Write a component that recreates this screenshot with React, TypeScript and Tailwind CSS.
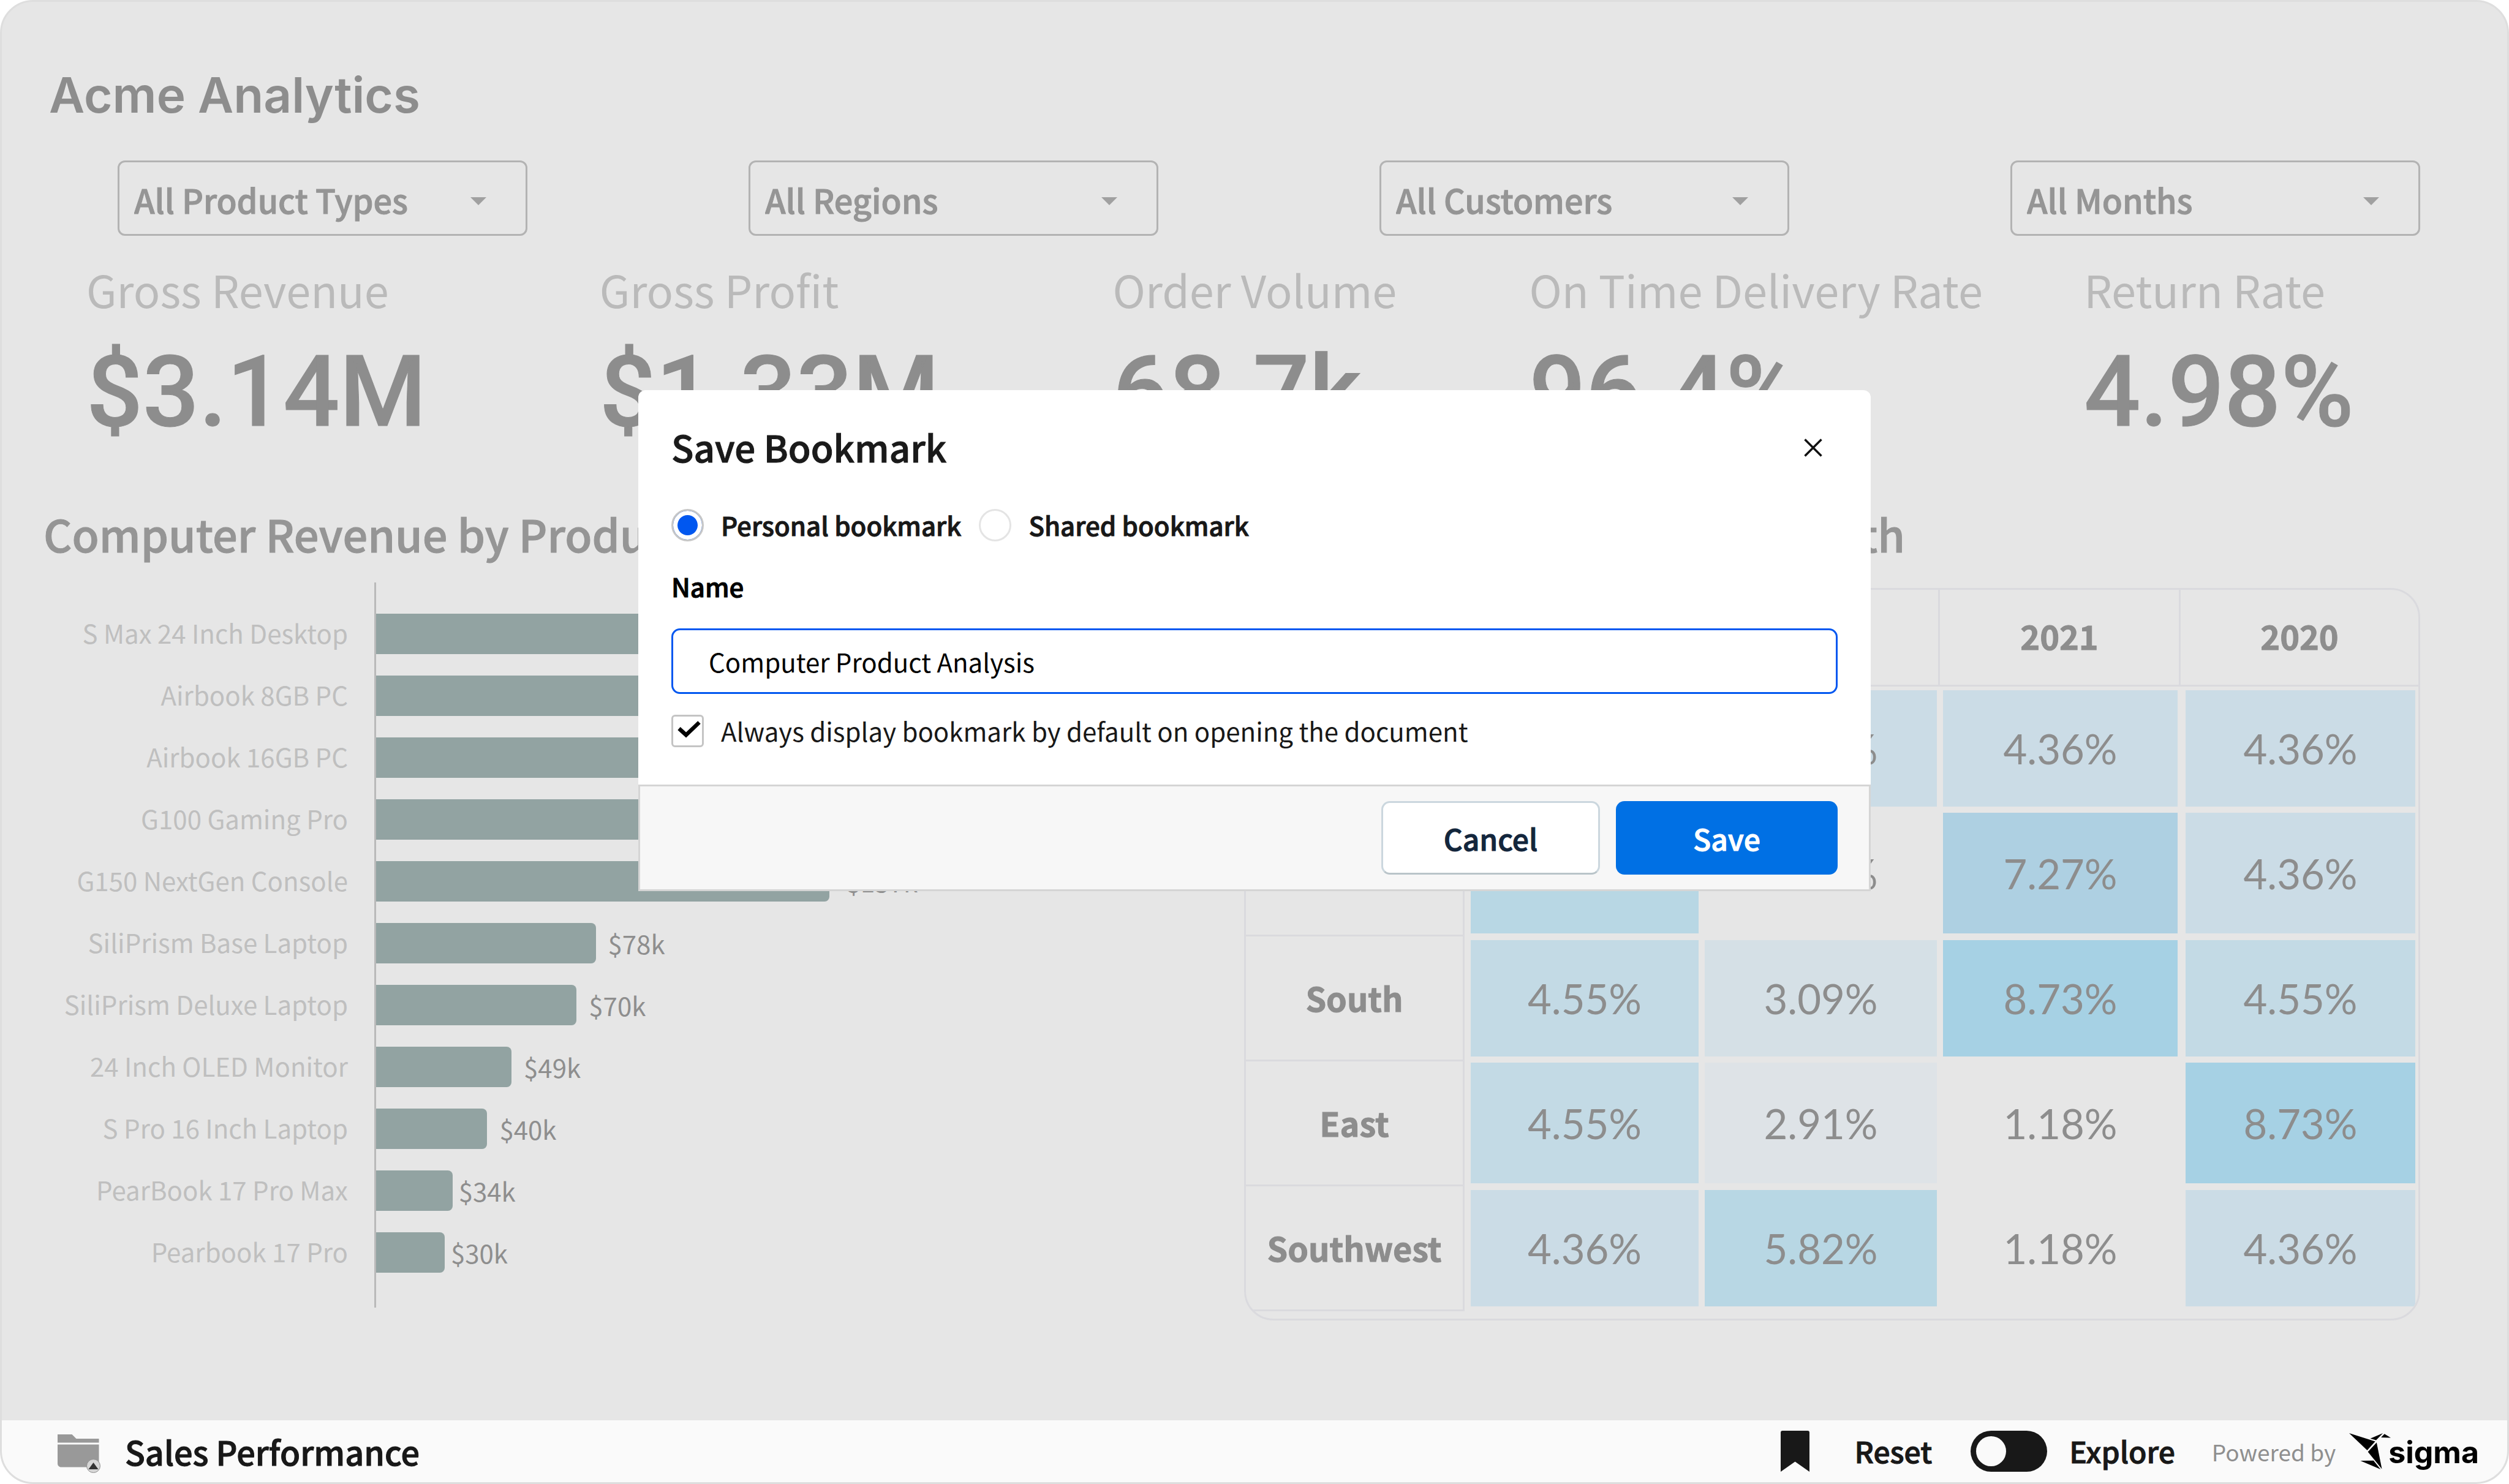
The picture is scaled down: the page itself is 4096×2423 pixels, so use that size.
import { useState } from "react";

const filters = [
  { label: "Product type", value: "All Product Types" },
  { label: "Region", value: "All Regions" },
  { label: "Customer", value: "All Customers" },
  { label: "Month", value: "All Months" },
];

const kpis = [
  { label: "Gross Revenue", value: "$3.14M" },
  { label: "Gross Profit", value: "$1.33M" },
  { label: "Order Volume", value: "68.7k" },
  { label: "On Time Delivery Rate", value: "96.4%" },
  { label: "Return Rate", value: "4.98%" },
];

// share: bar length as a percentage of the plot area
const products = [
  { name: "S Max 24 Inch Desktop", value: "$216k", share: 72 },
  { name: "Airbook 8GB PC", value: "$205k", share: 68 },
  { name: "Airbook 16GB PC", value: "$190k", share: 63 },
  { name: "G100 Gaming Pro", value: "$176k", share: 58 },
  { name: "G150 NextGen Console", value: "$157k", share: 52.2 },
  { name: "SiliPrism Base Laptop", value: "$78k", share: 25.3 },
  { name: "SiliPrism Deluxe Laptop", value: "$70k", share: 23.1 },
  { name: "24 Inch OLED Monitor", value: "$49k", share: 15.6 },
  { name: "S Pro 16 Inch Laptop", value: "$40k", share: 12.8 },
  { name: "PearBook 17 Pro Max", value: "$34k", share: 8.8 },
  { name: "Pearbook 17 Pro", value: "$30k", share: 7.9 },
];

// Longer bars leave more room before their value.
function barGap(share: number) {
  if (share < 10) return "gap-2.5";
  if (share > 50) return "gap-7";
  return "gap-5";
}

const years = ["2023", "2022", "2021", "2020"];

const regions = [
  { name: "West", cells: ["4.36%", "4.36%", "4.36%", "4.36%"] },
  { name: "Midwest", cells: ["5.82%", "1.18%", "7.27%", "4.36%"] },
  { name: "South", cells: ["4.55%", "3.09%", "8.73%", "4.55%"] },
  { name: "East", cells: ["4.55%", "2.91%", "1.18%", "8.73%"] },
  { name: "Southwest", cells: ["4.36%", "5.82%", "1.18%", "4.36%"] },
];

const heat: Record<string, string> = {
  "8.73%": "bg-[#a6d1e4]",
  "7.27%": "bg-[#aed0e2]",
  "5.82%": "bg-[#b8d7e4]",
  "4.55%": "bg-[#c3dae5]",
  "4.36%": "bg-[#cbdce6]",
  "3.09%": "bg-[#d5e0e6]",
  "2.91%": "bg-[#dee3e7]",
  "1.18%": "",
};

// Medium weight thickened by a hairline stroke gives a semibold text colour.
const semibold = "font-medium [-webkit-text-stroke:1px]";

function Filters() {
  return (
    <div className="mt-[59px] flex justify-between pl-[189px] pr-[142px]">
      {filters.map((f) => (
        <div key={f.label} className="relative w-[669px]">
          <select
            aria-label={f.label}
            className={`block h-[123px] w-full appearance-none rounded-xl border-[3px] border-[#b3b3b3] bg-transparent pt-1 pl-6 text-[54px] leading-[80px] text-[#959595] ${semibold}`}
          >
            <option>{f.value}</option>
          </select>
          <svg
            className="pointer-events-none absolute right-[67px] top-[60px] h-[13px] w-[26px]"
            viewBox="0 0 26 13"
            aria-hidden="true"
          >
            <path d="M0 0H26L13 13Z" fill="#a0a0a0" />
          </svg>
        </div>
      ))}
    </div>
  );
}

function Kpis() {
  return (
    <dl className="mt-[43px] grid grid-cols-[838fr_838fr_680fr_906fr_691fr] pl-[138px]">
      {kpis.map((k) => (
        <div key={k.label}>
          <dt className="text-[72px] leading-[88px] whitespace-nowrap text-[#bababa]">{k.label}</dt>
          <dd className="mt-[34px] font-['Roboto',sans-serif] text-[162px] leading-[180px] font-medium text-[#8d8d8d] [-webkit-text-stroke:1px]">
            {k.value}
          </dd>
        </div>
      ))}
    </dl>
  );
}

function RevenueChart() {
  return (
    <section>
      <h2
        className={`pl-[68px] text-[72px] leading-[88px] whitespace-nowrap text-[#959595] ${semibold}`}
      >
        Computer Revenue by Product
      </h2>
      <div className="mt-9 flex">
        <ul className="w-[608px] shrink-0 pt-[31px] pr-[43px] text-right text-[42px] text-[#bfbfbf]">
          {products.map((p) => (
            <li key={p.name} className="h-[101px] leading-[101px] whitespace-nowrap">
              {p.name}
            </li>
          ))}
        </ul>
        <ul className="flex-1 border-l-[3px] border-[#bababa] pt-[33px] pb-10 text-[42px] text-[#8e8e8e]">
          {products.map((p) => (
            <li
              key={p.name}
              className={`flex h-[101px] items-center leading-[101px] ${barGap(p.share)}`}
            >
              <div className="h-[66px] rounded-r-lg bg-[#92a3a2]" style={{ width: `${p.share}%` }} />
              {p.value}
            </li>
          ))}
        </ul>
      </div>
    </section>
  );
}

function RegionTable() {
  return (
    <section className="pr-[142px]">
      <h2
        className={`pl-[14px] text-[72px] leading-[88px] whitespace-nowrap text-[#959595] ${semibold}`}
      >
        Return Rate by Region &amp; Month
      </h2>
      <div className="mt-[45px] overflow-hidden rounded-[48px] border-[3px] border-[#dadade] pb-3">
        <table className="w-full table-fixed border-separate border-spacing-0 text-center text-[#8d8d8d]">
          <colgroup>
            <col className="w-[357px]" />
            <col className="w-[387px]" />
            <col className="w-[389px]" />
            <col className="w-[393px]" />
            <col className="w-[388px]" />
          </colgroup>
          <thead>
            <tr className="h-[158px] text-[54px] leading-[80px]">
              <td className="border-r-[3px] border-b-[3px] border-[#dadade]" />
              {years.map((y) => (
                <th
                  key={y}
                  scope="col"
                  className="border-r-[3px] border-b-[3px] border-[#dadade] pb-1.5 font-bold [-webkit-text-stroke:1px] last:border-r-0"
                >
                  {y}
                </th>
              ))}
            </tr>
          </thead>
          <tbody>
            {regions.map((r) => (
              <tr key={r.name} className="group h-[204px]">
                <th
                  scope="row"
                  className="border-r-[3px] border-b-[3px] border-[#dadade] pb-0.5 text-[54px] leading-[80px] font-bold [-webkit-text-stroke:1px]"
                >
                  {r.name}
                </th>
                {r.cells.map((c, i) => (
                  <td
                    key={years[i]}
                    className="h-[204px] px-[5px] pt-1.5 pb-2 font-['Lato',sans-serif] text-[67px] leading-[80px] group-even:pt-0.5 group-even:pb-[5px] nth-2:pl-2.5 last:pl-2"
                  >
                    <div
                      className={`flex h-[190px] items-center justify-center group-even:h-[197px] ${heat[c]}`}
                    >
                      {c}
                    </div>
                  </td>
                ))}
              </tr>
            ))}
          </tbody>
        </table>
      </div>
    </section>
  );
}

function BookmarkDialog() {
  const [kind, setKind] = useState("personal");
  const [name, setName] = useState("Computer Product Analysis");
  const [always, setAlways] = useState(true);
  const radio =
    "size-[53px] appearance-none rounded-full border-[3px] border-[#e4e4e4] bg-white checked:border-[#c7c7c7] checked:bg-[#0057f0] checked:shadow-[inset_0_0_0_7px_white]";
  return (
    <div
      role="dialog"
      aria-labelledby="dialog-title"
      className="absolute top-[634px] left-1/2 w-[2012px] -translate-x-1/2 overflow-hidden rounded-t-xl bg-white"
    >
      <form onSubmit={(e) => e.preventDefault()}>
        <div className="px-[54px] pt-[52px] pb-14">
          <div className="flex items-center justify-between">
            <h2
              id="dialog-title"
              className={`text-[60px] leading-[80px] text-[#1a1a1a] ${semibold}`}
            >
              Save Bookmark
            </h2>
            <button type="button" aria-label="Close" className="mt-1 mr-[25px]">
              <svg className="size-[30px]" viewBox="0 0 30 30" aria-hidden="true">
                <path d="M1.5 1.5L28.5 28.5M28.5 1.5L1.5 28.5" stroke="#111" strokeWidth="3.5" />
              </svg>
            </button>
          </div>
          <div
            className={`mt-14 flex items-center text-[42px] leading-[64px] text-[#181818] ${semibold}`}
          >
            <input
              id="personal"
              type="radio"
              name="kind"
              checked={kind === "personal"}
              onChange={() => setKind("personal")}
              className={radio}
            />
            <label htmlFor="personal" className="ml-7">
              Personal bookmark
            </label>
            <input
              id="shared"
              type="radio"
              name="kind"
              checked={kind === "shared"}
              onChange={() => setKind("shared")}
              className={`ml-[29px] ${radio}`}
            />
            <label htmlFor="shared" className="ml-7">
              Shared bookmark
            </label>
          </div>
          <label
            htmlFor="bookmark-name"
            className={`mt-9 block text-[42px] leading-[64px] text-black ${semibold}`}
          >
            Name
          </label>
          <input
            id="bookmark-name"
            type="text"
            value={name}
            onChange={(e) => setName(e.target.value)}
            className="mt-[37px] block h-[107px] w-full rounded-[14px] border-[3px] border-[#0057f0] bg-white pl-[58px] text-[42px] text-black outline-none"
          />
          <div className="mt-7 flex items-center">
            <div className="relative size-[53px]">
              <input
                id="always"
                type="checkbox"
                checked={always}
                onChange={(e) => setAlways(e.target.checked)}
                className="peer block size-[53px] appearance-none rounded-md border-[3px] border-[#c4c4c4] bg-white"
              />
              <svg
                className="pointer-events-none absolute inset-0 hidden size-[53px] peer-checked:block"
                viewBox="0 0 53 53"
                aria-hidden="true"
              >
                <path d="M12.5 22.5L24 33L45.5 12.5" fill="none" stroke="#000" strokeWidth="6.5" />
              </svg>
            </div>
            <label htmlFor="always" className="ml-7 text-[42px] leading-[64px] text-[#181818]">
              Always display bookmark by default on opening the document
            </label>
          </div>
        </div>
        <div
          className={`flex justify-end gap-[26px] border-[3px] border-[#d5d5d5] bg-[#f7f7f7] px-[51px] py-6 text-[48px] leading-[72px] ${semibold}`}
        >
          <button
            type="button"
            className="h-[120px] w-[357px] rounded-[14px] border-[3px] border-[#cbd7de] border-b-[#b9c4c9] bg-white text-[#13263c]"
          >
            Cancel
          </button>
          <button type="submit" className="h-[120px] w-[362px] rounded-[14px] bg-[#0070e4] text-white">
            Save
          </button>
        </div>
      </form>
    </div>
  );
}

function Footer() {
  const [explore, setExplore] = useState(false);
  return (
    <footer className="flex h-[101px] items-center bg-[#fafafa] pr-[46px] pl-[91px] text-[#181818]">
      <svg className="mt-2 h-[64px] w-[72px]" viewBox="0 0 72 64" aria-hidden="true">
        <path d="M0 0H23.5L30.5 7H67.5V13.5H0Z" fill="#999" />
        <path d="M0 16.5H67.5V53.5H6C2.5 53.5 0 51 0 47.5Z" fill="#999" />
        <circle cx="58.5" cy="51.5" r="11" fill="#d6d6d6" stroke="#8c8c8c" />
        <path d="M58.5 46L66.5 57H50.5Z" fill="#333" />
      </svg>
      <span className={`ml-[38px] text-[54px] leading-[80px] ${semibold}`}>Sales Performance</span>
      <div className="ml-auto flex items-center text-[48px] leading-[72px]">
        <button type="button" aria-label="Bookmarks">
          <svg className="h-[67px] w-[47px]" viewBox="0 0 47 67" aria-hidden="true">
            <path d="M3 0H44Q47 0 47 3V67L23.5 50.5L0 67V3Q0 0 3 0Z" fill="#181818" />
          </svg>
        </button>
        <button type="button" className={`ml-[73px] pb-1 ${semibold}`}>
          Reset
        </button>
        <span className="relative ml-[63px] h-[67px] w-[125px]">
          <input
            id="explore"
            type="checkbox"
            role="switch"
            checked={explore}
            onChange={(e) => setExplore(e.target.checked)}
            className="peer block h-[67px] w-[125px] appearance-none rounded-full bg-[#181818]"
          />
          <span className="pointer-events-none absolute top-[9px] left-[9px] size-[49px] rounded-full bg-[#fafafa] peer-checked:left-[67px]" />
        </span>
        <label htmlFor="explore" className={`ml-[36px] pb-1 ${semibold}`}>
          Explore
        </label>
        <span className="ml-[60px] text-[37px] leading-[60px] text-[#8f8f8f]">Powered by</span>
        <a href="#sigma" className="ml-[22px] flex items-center text-black">
          <svg className="h-[59px] w-[68px]" viewBox="49 97 244 211" aria-hidden="true">
            <path d="M49 97L202 145L155 197Z" />
            <path d="M173 128L247 97L207 138Z" />
            <path d="M256 101L294 124L236 122Z" />
            <path d="M210 151L241 307L159 206Z" />
            <path d="M115 258L192 257L233 308Z" />
          </svg>
          <span className="-ml-1 pt-0.5 font-['Inter',sans-serif] text-[50px] leading-[60px] font-bold">
            sigma
          </span>
        </a>
      </div>
    </footer>
  );
}

export default function App() {
  return (
    <div className="relative flex min-h-screen w-full flex-col overflow-hidden rounded-[54px] border-[3px] border-[#dedede] bg-[#e6e6e6] font-['Noto_Sans_CJK_SC',sans-serif]">
      <main className="flex-1 pt-[104px]">
        <h1 className="pl-[77px] font-['Inter',sans-serif] text-[80px] leading-[96px] font-semibold text-[#8d8d8d]">
          Acme Analytics
        </h1>
        <Filters />
        <Kpis />
        <div className="mt-[97px] grid grid-cols-[2028fr_2062fr]">
          <RevenueChart />
          <RegionTable />
        </div>
      </main>
      <Footer />
      <BookmarkDialog />
    </div>
  );
}
